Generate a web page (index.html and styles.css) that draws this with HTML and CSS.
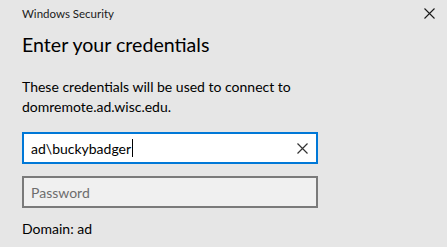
FILE: index.html
```html
<!DOCTYPE html>
<html lang="en">
<head>
    <meta charset="UTF-8">
    <title>Windows Security</title>
    <link rel="stylesheet" href="styles.css">
</head>
<body>
    <div class="dialog">
        <div class="titlebar">
            <span class="app-name">Windows Security</span>
            <span class="close-btn">
                <svg width="11" height="11" viewBox="0 0 11 11"><path d="M0.5 0.5L10.5 10.5M10.5 0.5L0.5 10.5" stroke="#1a1a1a" stroke-width="1.1" fill="none"/></svg>
            </span>
        </div>
        <h1>Enter your credentials</h1>
        <p class="message">These credentials will be used to connect to<br>domremote.ad.wisc.edu.</p>
        <div class="field field-active">
            <span class="field-value">ad\buckybadger</span><span class="caret"></span>
            <span class="clear-btn">
                <svg width="11" height="11" viewBox="0 0 11 11"><path d="M0.5 0.5L10.5 10.5M10.5 0.5L0.5 10.5" stroke="#333" stroke-width="1.2" fill="none"/></svg>
            </span>
        </div>
        <div class="field field-empty">
            <span class="placeholder">Password</span>
        </div>
        <div class="domain">Domain: ad</div>
    </div>
</body>
</html>
```
FILE: styles.css
```css
body {
    margin: 0;
    background-color: #e6e6e6;
    font-family: 'Lato', 'Liberation Sans', sans-serif;
    color: #000;
}
.dialog {
    padding: 6px 12px 0 22px;
}
.titlebar {
    display: flex;
    justify-content: space-between;
    align-items: flex-start;
}
.app-name {
    font-size: 11.5px;
    line-height: 16px;
    color: #1a1a1a;
}
.close-btn {
    display: flex;
    margin-top: 2px;
}
h1 {
    font-size: 19.6px;
    font-weight: 400;
    line-height: 28px;
    margin: 9px 0 0;
}
.message {
    font-size: 14px;
    line-height: 20px;
    margin: 18px 0 0;
}
.field {
    width: 296px;
    height: 32px;
    box-sizing: border-box;
    border: 2px solid #7a7a7a;
    display: flex;
    align-items: center;
    padding: 0 8px 0 7px;
    font-size: 14px;
    margin-top: 12px;
}
.field-active {
    border-color: #0078d7;
    background-color: #fff;
    margin-top: 15px;
}
.field-empty {
    background-color: #f0f0f0;
}
.caret {
    width: 1px;
    height: 18px;
    background-color: #000;
    margin-left: 1px;
}
.clear-btn {
    display: flex;
    margin-left: auto;
}
.placeholder {
    color: #6d6d6d;
}
.domain {
    font-size: 14px;
    line-height: 20px;
    margin-top: 11px;
}
```
